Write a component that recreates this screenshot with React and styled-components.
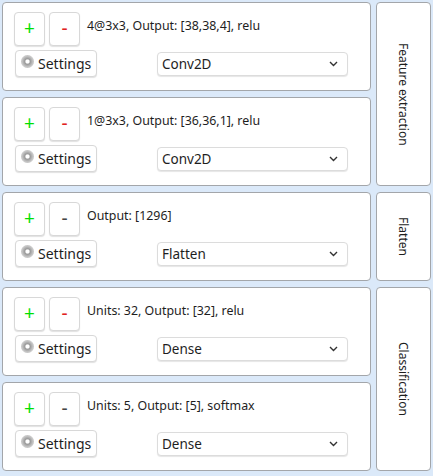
import React from "react";
import styled, { createGlobalStyle } from "styled-components";

const GlobalStyle = createGlobalStyle`
    body {
        margin: 0;
        background-color: #dbe9f9;
        font-family: "Noto Sans", "Open Sans", sans-serif;
        color: #1e1e1e;
    }
`;

const Page = styled.div`
    display: flex;
    flex-direction: column;
    gap: 6px;
    padding: 2px;
    width: 433px;
    box-sizing: border-box;
`;

const Group = styled.div`
    display: grid;
    grid-template-columns: 1fr 55px;
    gap: 5px;
`;

const Layers = styled.div`
    display: flex;
    flex-direction: column;
    gap: 6px;
`;

const Card = styled.div`
    background-color: #ffffff;
    border: 1px solid #a3a6aa;
    border-radius: 4px;
    padding: 9px 12px 11px 11px;
    height: 89px;
    box-sizing: border-box;
    display: flex;
    flex-direction: column;
    gap: 4px;
`;

const TopRow = styled.div`
    display: flex;
    align-items: flex-start;
    gap: 4px;
`;

const Summary = styled.span`
    font-size: 12.4px;
    margin-left: 3px;
    margin-top: 5px;
`;

const SquareButton = styled.button`
    width: 31px;
    height: 34px;
    padding: 0 0 2px;
    background: #ffffff;
    border: 1px solid #d8d8d8;
    border-radius: 4px;
    box-shadow: 0 1px 1px rgba(0, 0, 0, 0.12);
    font-family: "Noto Sans", sans-serif;
    font-size: 19px;
    line-height: 1;
    color: ${(p) => p.color};
`;

const BottomRow = styled.div`
    display: flex;
    align-items: center;
    justify-content: space-between;
    padding-right: 10px;
`;

const SettingsButton = styled.button`
    display: flex;
    align-items: center;
    gap: 4px;
    height: 27px;
    padding: 0 5px;
    margin-left: 1px;
    background: #ffffff;
    border: 1px solid #d8d8d8;
    border-radius: 4px;
    box-shadow: 0 1px 1px rgba(0, 0, 0, 0.12);
    font-family: inherit;
    font-size: 14px;
    color: #1e1e1e;
`;

const Disc = styled.span`
    width: 13px;
    height: 13px;
    border-radius: 50%;
    margin-top: -5px;
    background: radial-gradient(circle, #ffffff 0 16%, #9a9a9a 30%, #c9c9c9 62%, #a8a8a8 100%);
`;

const Select = styled.div`
    width: 191px;
    height: 24px;
    box-sizing: border-box;
    display: flex;
    align-items: center;
    justify-content: space-between;
    padding: 0 9px 0 4px;
    background: #ffffff;
    border: 1px solid #dcdcdc;
    border-radius: 4px;
    box-shadow: 0 1px 1px rgba(0, 0, 0, 0.1);
    font-size: 13.5px;
`;

const Label = styled.div`
    background-color: #ffffff;
    border: 1px solid #a3a6aa;
    border-radius: 4px;
    display: flex;
    align-items: center;
    justify-content: center;
    writing-mode: vertical-rl;
    font-size: 12px;
`;

const Chevron = () => (
    <svg width="9" height="6" viewBox="0 0 9 6">
        <path d="M1 1 L4.5 4.5 L8 1" fill="none" stroke="#333" strokeWidth="1.4" />
    </svg>
);

const Layer = ({ summary, type, minusColor }) => (
    <Card>
        <TopRow>
            <SquareButton color="#00e000">+</SquareButton>
            <SquareButton color={minusColor}>-</SquareButton>
            <Summary>{summary}</Summary>
        </TopRow>
        <BottomRow>
            <SettingsButton>
                <Disc />
                Settings
            </SettingsButton>
            <Select>
                {type}
                <Chevron />
            </Select>
        </BottomRow>
    </Card>
);

const groups = [
    {
        name: "Feature extraction",
        layers: [
            { summary: "4@3x3, Output: [38,38,4], relu", type: "Conv2D", minusColor: "#e02020" },
            { summary: "1@3x3, Output: [36,36,1], relu", type: "Conv2D", minusColor: "#e02020" },
        ],
    },
    {
        name: "Flatten",
        layers: [{ summary: "Output: [1296]", type: "Flatten", minusColor: "#444" }],
    },
    {
        name: "Classification",
        layers: [
            { summary: "Units: 32, Output: [32], relu", type: "Dense", minusColor: "#e02020" },
            { summary: "Units: 5, Output: [5], softmax", type: "Dense", minusColor: "#444" },
        ],
    },
];

export default function App() {
    return (
        <>
            <GlobalStyle />
            <Page>
                {groups.map((g) => (
                    <Group key={g.name}>
                        <Layers>
                            {g.layers.map((l, i) => (
                                <Layer key={i} {...l} />
                            ))}
                        </Layers>
                        <Label>{g.name}</Label>
                    </Group>
                ))}
            </Page>
        </>
    );
}
